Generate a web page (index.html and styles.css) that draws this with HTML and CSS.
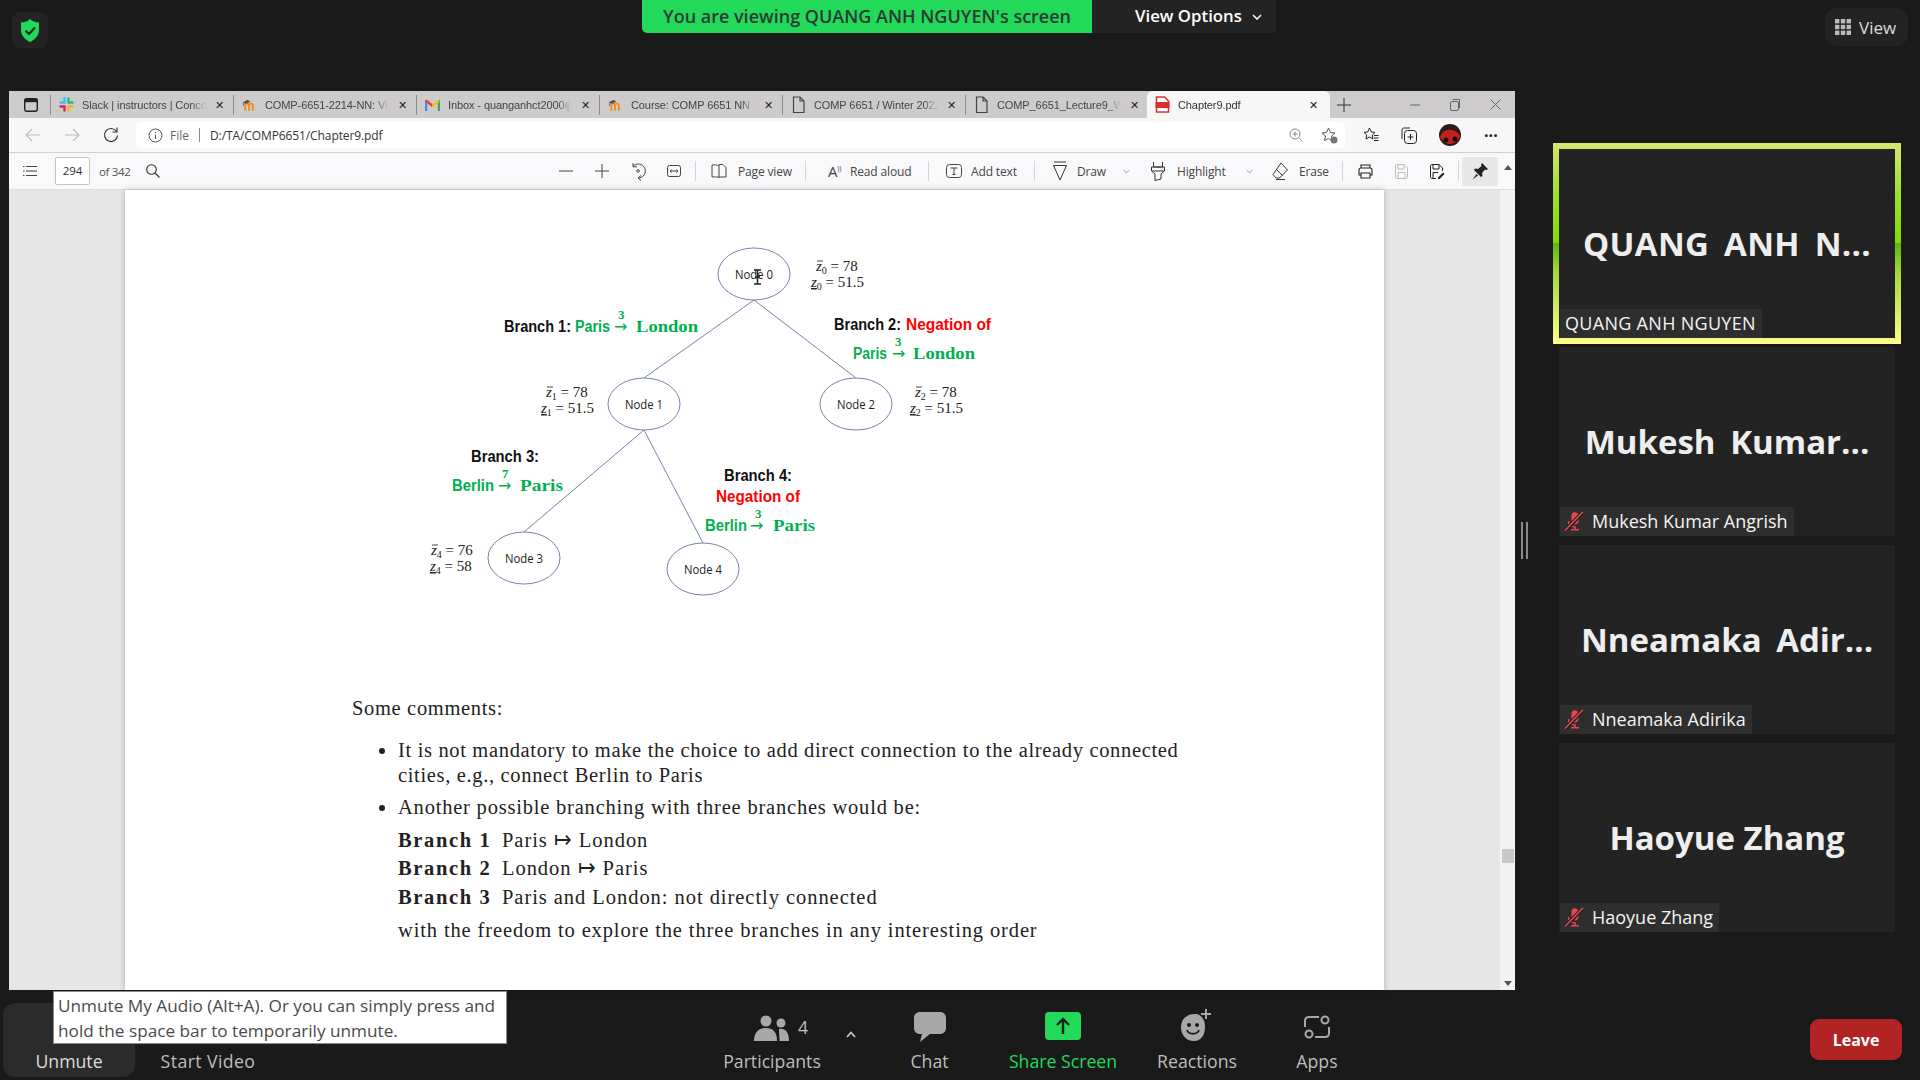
FILE: index.html
```html
<!DOCTYPE html>
<html lang="en">
<head>
    <meta charset="UTF-8">
    <title>Zoom meeting</title>
    <link rel="stylesheet" href="styles.css">
</head>
<body>
    <svg class="defs" width="0" height="0">
        <symbol id="moodle" viewBox="0 0 16 14">
            <path d="M1 13V7.500C1 6 2 5.500 3 5.500C4.500 5.500 5 6.500 5 7.500V13M5 7.500C5 6 6 5.500 7 5.500C8.500 5.500 9 6.500 9 7.500V13" transform="translate(2.500 0)" fill="none" stroke="#f58a1f" stroke-width="2"/>
            <path d="M1 4L6 1.500L9 3.500L4 6Z" fill="#555"/>
            <path d="M1.500 4V8" stroke="#555" stroke-width=".8"/>
        </symbol>
        <symbol id="doc" viewBox="0 0 14 18">
            <path d="M2 1H8.500L12.500 5V16.500H2Z M8.500 1V5H12.500" fill="none" stroke="#444" stroke-width="1.200"/>
        </symbol>
        <symbol id="mute" viewBox="0 0 20 20">
            <path d="M12 1.500C9.500 .5 7.500 2 7.500 4.500V10C7.500 12 9 13.500 11 13.500C13 13.500 14.500 12 14.500 10V4.500C14.500 3 13.500 2 12 1.500Z" fill="#e8494f"/>
            <path d="M4.500 10C4.500 14 7.500 16 11 16C11 17 11 18 11 18.500M7 18.800H15" fill="none" stroke="#e8494f" stroke-width="1.500"/>
            <path d="M1 20L19 1" stroke="#232323" stroke-width="4"/>
            <path d="M1 19.500L19 .8" stroke="#e8494f" stroke-width="1.500"/>
        </symbol>
        <symbol id="chev" viewBox="0 0 10 6">
            <path d="M1 1L5 5L9 1" fill="none" stroke="#777" stroke-width="1"/>
        </symbol>
    </svg>

    <!-- top bar -->
    <header class="topbar">
        <div class="topbar-left">
            <div class="shield-tile">
                <svg width="18" height="23" viewBox="0 0 18 23"><path d="M9 0C11 2 14.500 3.500 18 3.500V11C18 17 13 21 9 23C5 21 0 17 0 11V3.500C3.500 3.500 7 2 9 0Z" fill="#23d959"/><path d="M4.500 11.500L8 15L14 8.500" fill="none" stroke="#1f2a24" stroke-width="2.200"/></svg>
            </div>
        </div>
        <div class="viewing">
            <div class="viewing-label">You are viewing QUANG ANH NGUYEN's screen</div>
            <div class="view-options">View Options
                <svg width="10" height="6" viewBox="0 0 10 6"><path d="M1 1L5 5L9 1" fill="none" stroke="#fff" stroke-width="1.500"/></svg>
            </div>
        </div>
        <div class="topbar-right">
            <div class="view-btn">
                <svg width="16" height="16" viewBox="0 0 16 16" fill="#bbb"><rect width="4.400" height="4.400"/><rect x="5.800" width="4.400" height="4.400"/><rect x="11.600" width="4.400" height="4.400"/><rect y="5.800" width="4.400" height="4.400"/><rect x="5.800" y="5.800" width="4.400" height="4.400"/><rect x="11.600" y="5.800" width="4.400" height="4.400"/><rect y="11.600" width="4.400" height="4.400"/><rect x="5.800" y="11.600" width="4.400" height="4.400"/><rect x="11.600" y="11.600" width="4.400" height="4.400"/></svg>
                View
            </div>
        </div>
    </header>

    <main class="stage">
        <!-- shared screen: browser -->
        <section class="browser">
            <div class="tabstrip">
                <div class="app-icon">
                    <svg width="14" height="14" viewBox="0 0 14 14"><rect x=".7" y=".7" width="12.600" height="12.600" rx="2" fill="none" stroke="#222" stroke-width="1.400"/><rect x=".7" y=".7" width="12.600" height="3.500" fill="#222"/></svg>
                </div>
                <i class="tab-sep"></i>
                <div class="tab">
                    <svg class="tab-icon" width="15" height="15" viewBox="0 0 15 15"><path d="M5.500 1V5.500H1.500" stroke="#36c5f0" stroke-width="2.400" fill="none" stroke-linecap="round"/><path d="M9.500 1.500V5.500H13.500" stroke="#2eb67d" stroke-width="2.400" fill="none" stroke-linecap="round"/><path d="M13.500 9.500H9.500V13.500" stroke="#ecb22e" stroke-width="2.400" fill="none" stroke-linecap="round"/><path d="M5.500 13.500V9.500H1.500" stroke="#e01e5a" stroke-width="2.400" fill="none" stroke-linecap="round"/></svg>
                    <span class="tab-title">Slack | instructors | Concor</span>
                    <span class="tab-close">✕</span>
                </div>
                <i class="tab-sep"></i>
                <div class="tab">
                    <svg class="tab-icon" width="15" height="14"><use href="#moodle"/></svg>
                    <span class="tab-title">COMP-6651-2214-NN: Vir</span>
                    <span class="tab-close">✕</span>
                </div>
                <i class="tab-sep"></i>
                <div class="tab">
                    <svg class="tab-icon" width="15" height="12" viewBox="0 0 15 12"><path d="M1 12V1" stroke="#4285f4" stroke-width="2.400"/><path d="M14 12V1" stroke="#34a853" stroke-width="2.400"/><path d="M1 1.500L7.500 7" stroke="#ea4335" stroke-width="2.400"/><path d="M14 1.500L7.500 7" stroke="#fbbc04" stroke-width="2.400"/></svg>
                    <span class="tab-title">Inbox - quanganhct2000@</span>
                    <span class="tab-close">✕</span>
                </div>
                <i class="tab-sep"></i>
                <div class="tab">
                    <svg class="tab-icon" width="15" height="14"><use href="#moodle"/></svg>
                    <span class="tab-title">Course: COMP 6651 NN 2</span>
                    <span class="tab-close">✕</span>
                </div>
                <i class="tab-sep"></i>
                <div class="tab">
                    <svg class="tab-icon" width="14" height="18"><use href="#doc"/></svg>
                    <span class="tab-title">COMP 6651 / Winter 2022</span>
                    <span class="tab-close">✕</span>
                </div>
                <i class="tab-sep"></i>
                <div class="tab">
                    <svg class="tab-icon" width="14" height="18"><use href="#doc"/></svg>
                    <span class="tab-title">COMP_6651_Lecture9_Wir</span>
                    <span class="tab-close">✕</span>
                </div>
                <div class="tab tab-active">
                    <svg class="tab-icon" width="14" height="17" viewBox="0 0 14 17"><path d="M1 1H9L13 5V16H1Z" fill="#fff" stroke="#d9302c" stroke-width="1.500"/><rect y="6" width="14" height="6" fill="#d9302c"/></svg>
                    <span class="tab-title">Chapter9.pdf</span>
                    <span class="tab-close">✕</span>
                </div>
                <div class="tab-plus">
                    <svg width="14" height="14" viewBox="0 0 14 14"><path d="M7 0V14M0 7H14" stroke="#333" stroke-width="1"/></svg>
                </div>
                <div class="win-controls">
                    <svg width="10" height="10" viewBox="0 0 10 10"><path d="M0 5H10" stroke="#666"/></svg>
                    <svg width="10" height="12" viewBox="0 0 10 12"><rect x=".5" y="2.500" width="8" height="9" rx="1.500" fill="none" stroke="#666"/><path d="M2.500 .5H9.500V9" fill="none" stroke="#666"/></svg>
                    <svg width="11" height="11" viewBox="0 0 11 11"><path d="M.5 .5L10.500 10.500M10.500 .5L.5 10.500" stroke="#666"/></svg>
                </div>
            </div>

            <div class="navbar">
                <svg class="nav-btn" width="16" height="14" viewBox="0 0 16 14"><path d="M15 7H1M7 1L1 7L7 13" fill="none" stroke="#bbb" stroke-width="1.100"/></svg>
                <svg class="nav-btn" width="16" height="14" viewBox="0 0 16 14"><path d="M1 7H15M9 1L15 7L9 13" fill="none" stroke="#bbb" stroke-width="1.100"/></svg>
                <svg class="nav-btn" width="16" height="16" viewBox="0 0 16 16"><path d="M13.500 4.500A6.500 6.500 0 1 0 14.500 8.500" fill="none" stroke="#333" stroke-width="1.200"/><path d="M14 .5V5H9.500" fill="none" stroke="#333" stroke-width="1.200"/></svg>
                <div class="address">
                    <svg width="15" height="15" viewBox="0 0 15 15"><circle cx="7.500" cy="7.500" r="6.500" fill="none" stroke="#555"/><path d="M7.500 6.500V11M7.500 4V5" stroke="#555"/></svg>
                    <span class="addr-file">File</span>
                    <i class="addr-sep"></i>
                    <span class="addr-url">D:/TA/COMP6651/Chapter9.pdf</span>
                    <div class="addr-right">
                        <svg width="14" height="14" viewBox="0 0 14 14"><circle cx="6" cy="6" r="5" fill="none" stroke="#888"/><path d="M10 10L13.500 13.500M6 3.500V8.500M3.500 6H8.500" stroke="#888"/></svg>
                        <svg width="17" height="17" viewBox="0 0 17 17"><path d="M7.500 1L9.500 5.500L14 6L10.500 9L11 13.500L7.500 11.500L3.500 13.500L4.500 9L1 6L5.500 5.500Z" fill="none" stroke="#555"/><circle cx="13" cy="13" r="3.500" fill="#777"/></svg>
                    </div>
                </div>
                <div class="nav-right">
                    <svg width="16" height="16" viewBox="0 0 16 16"><path d="M6.500 1L8.300 5L12 5.400L9.300 8L10 12L6.500 10L3 12L3.700 8L1 5.400L4.700 5Z" fill="none" stroke="#222"/><path d="M11 8.500H15.500M11 11H15.500M11 13.500H15.500" stroke="#222"/></svg>
                    <svg width="16" height="17" viewBox="0 0 16 17"><rect x="3.500" y="3.500" width="12" height="13" rx="3" fill="none" stroke="#222"/><path d="M1 12V3C1 1.500 2 1 3 1H9M9.500 7V13M6.500 10H12.500" fill="none" stroke="#222"/></svg>
                    <svg width="22" height="22" viewBox="0 0 22 22"><circle cx="11" cy="11" r="11" fill="#2a1c16"/><path d="M1 13C3 7 8 5 13 6C17 7 20 9 21 12C20 17 15 20 10 20C6 19 3 17 1 13Z" fill="#c41f1f"/><circle cx="7" cy="16" r="2.500" fill="#111"/><circle cx="16" cy="15" r="2.500" fill="#111"/></svg>
                    <span class="nav-dots">···</span>
                </div>
            </div>

            <div class="pdf-tools">
                <svg class="pdf-list" width="14" height="10" viewBox="0 0 14 10"><path d="M3 .5H14M3 5H14M3 9.500H14M0 .5H1.500M0 5H1.500M0 9.500H1.500" stroke="#444"/></svg>
                <div class="page-box">294</div>
                <span class="page-of">of 342</span>
                <svg class="pdf-search" width="14" height="14" viewBox="0 0 14 14"><circle cx="5.500" cy="5.500" r="4.800" fill="none" stroke="#333" stroke-width="1.100"/><path d="M9 9L13.500 13.500" stroke="#333" stroke-width="1.100"/></svg>

                <div class="tbtn tbtn-first"><svg width="14" height="2" viewBox="0 0 14 2"><path d="M0 1H14" stroke="#444"/></svg></div>
                <div class="tbtn"><svg width="14" height="14" viewBox="0 0 14 14"><path d="M0 7H14M7 0V14" stroke="#444"/></svg></div>
                <div class="tbtn"><svg width="16" height="19" viewBox="0 0 16 19"><path d="M3 4.500A7 7 0 1 1 8 16" fill="none" stroke="#444"/><path d="M3 1V4.800H7M11 13.500L8 16L11 18.500" fill="none" stroke="#444"/><circle cx="8" cy="9" r="1.300" fill="none" stroke="#444"/></svg></div>
                <div class="tbtn"><svg width="14" height="12" viewBox="0 0 14 12"><rect x=".5" y=".5" width="13" height="11" rx="2" fill="none" stroke="#444"/><path d="M3 6H11M4.500 4.500L3 6L4.500 7.500M9.500 4.500L11 6L9.500 7.500" fill="none" stroke="#444"/></svg></div>
                <i class="tool-sep"></i>

                <div class="tool tool-page"><svg width="16" height="14" viewBox="0 0 16 14"><path d="M8 2C6 .8 3 .8 1 1V13C3 12.800 6 12.800 8 13.500ZM8 2V.5H12L15 3.500V13H8" fill="none" stroke="#444"/></svg><span>Page view</span></div>
                <i class="tool-sep"></i>
                <div class="tool tool-read"><span class="read-a">A<sup>))</sup></span><span>Read aloud</span></div>
                <i class="tool-sep"></i>
                <div class="tool tool-add"><svg width="16" height="14" viewBox="0 0 16 14"><rect x=".5" y=".5" width="15" height="13" rx="3" fill="none" stroke="#444"/><path d="M4.500 4H11.500M8 4V10.500M6.500 10.500H9.500" fill="none" stroke="#444"/></svg><span>Add text</span></div>
                <i class="tool-sep"></i>
                <div class="tool tool-draw"><svg width="14" height="20" viewBox="0 0 14 20"><path d="M.5 4.500H13.500L7 19ZM1 1H13" fill="none" stroke="#333"/></svg><span>Draw</span><svg class="tool-chev" width="7" height="5"><use href="#chev"/></svg></div>
                <div class="tool tool-high"><svg width="14" height="20" viewBox="0 0 14 20"><path d="M2.500 1V6H11.500V1M.5 6H13.500V10L10 13V18L4 19.500V13L.5 10ZM1 10H13" fill="none" stroke="#333"/></svg><span>Highlight</span><svg class="tool-chev" width="7" height="5"><use href="#chev"/></svg></div>
                <div class="tool tool-erase"><svg width="16" height="18" viewBox="0 0 16 18"><path d="M9 1L15.500 8L7.500 16H4L1 12.500ZM4 7L10.500 13.500M4 17.500H13" fill="none" stroke="#333"/></svg><span>Erase</span></div>
                <i class="tool-sep"></i>
                <div class="tbtn tbtn-print"><svg width="15" height="15" viewBox="0 0 15 15"><path d="M3 4V1H12V4M3 11H1V6C1 5 2 4 3 4H12C13 4 14 5 14 6V11H12M3 9H12V14H3Z" fill="none" stroke="#222" stroke-width="1.100"/></svg></div>
                <div class="tbtn"><svg width="13" height="15" viewBox="0 0 13 15"><path d="M.5 2C.5 1 1 .5 2 .5H9L12.500 4V13C12.500 14 12 14.500 11 14.500H2C1 14.500 .5 14 .5 13ZM3 .5V5H9V.5M3 14.500V8.500H10V14.500" fill="none" stroke="#bbb"/></svg></div>
                <div class="tbtn"><svg width="15" height="15" viewBox="0 0 15 15"><path d="M6 14.500H2C1 14.500 .5 14 .5 13V2C.5 1 1 .5 2 .5H9L12.500 4V7M3 .5V5H9V.5M3 14V8.500H8" fill="none" stroke="#222"/><path d="M8 13.500L13 8.500L14.500 10L9.500 15H8Z" fill="#222"/></svg></div>
                <i class="tool-sep"></i>
                <div class="pin-btn"><svg width="16" height="17" viewBox="0 0 16 17"><path d="M10 0L16 6L14.500 7L13 6.500L10 10L10.500 13L9 14L2 7L3 5.500L6 6L9.500 3L9 1.500ZM4.500 11L.5 16.500L6 12.500Z" fill="#222"/></svg></div>
            </div>

            <div class="viewer">
                <div class="pdf-side"></div>
                <article class="pdf-page">
                    <svg class="diagram" width="1259" height="500" viewBox="125 190 1259 500">
                        <g class="edges">
                            <path d="M754 300L644 378M754 300L856 378M644 430L524 532M644 430L703 543"/>
                            <ellipse cx="754" cy="274" rx="36" ry="26"/>
                            <ellipse cx="644" cy="404" rx="36" ry="26"/>
                            <ellipse cx="856" cy="404" rx="36" ry="26"/>
                            <ellipse cx="524" cy="558" rx="36" ry="26"/>
                            <ellipse cx="703" cy="569" rx="36" ry="26"/>
                        </g>
                        <g class="node-label">
                            <text x="735" y="279" textLength="38" lengthAdjust="spacingAndGlyphs">Node 0</text>
                            <text x="625" y="409" textLength="38" lengthAdjust="spacingAndGlyphs">Node 1</text>
                            <text x="837" y="409" textLength="38" lengthAdjust="spacingAndGlyphs">Node 2</text>
                            <text x="505" y="563" textLength="38" lengthAdjust="spacingAndGlyphs">Node 3</text>
                            <text x="684" y="574" textLength="38" lengthAdjust="spacingAndGlyphs">Node 4</text>
                        </g>
                        <g class="bound">
                            <text x="816" y="271"><tspan class="it">z</tspan><tspan class="sub" dy="3">0</tspan><tspan dy="-3"> = 78</tspan></text>
                            <text x="811" y="287"><tspan class="it ul">z</tspan><tspan class="sub" dy="3">0</tspan><tspan dy="-3"> = 51.5</tspan></text>
                            <text x="546" y="397"><tspan class="it">z</tspan><tspan class="sub" dy="3">1</tspan><tspan dy="-3"> = 78</tspan></text>
                            <text x="541" y="413"><tspan class="it ul">z</tspan><tspan class="sub" dy="3">1</tspan><tspan dy="-3"> = 51.5</tspan></text>
                            <text x="915" y="397"><tspan class="it">z</tspan><tspan class="sub" dy="3">2</tspan><tspan dy="-3"> = 78</tspan></text>
                            <text x="910" y="413"><tspan class="it ul">z</tspan><tspan class="sub" dy="3">2</tspan><tspan dy="-3"> = 51.5</tspan></text>
                            <text x="431" y="555"><tspan class="it">z</tspan><tspan class="sub" dy="3">4</tspan><tspan dy="-3"> = 76</tspan></text>
                            <text x="430" y="571"><tspan class="it ul">z</tspan><tspan class="sub" dy="3">4</tspan><tspan dy="-3"> = 58</tspan></text>
                            <path class="bar" d="M817 261H823M547 387H553M916 387H922M432 545H438"/>
                        </g>
                        <g class="branch">
                            <text x="504" y="332" textLength="67" lengthAdjust="spacingAndGlyphs">Branch 1:</text>
                            <text class="green" x="575" y="332" textLength="35" lengthAdjust="spacingAndGlyphs">Paris</text>
                            <text class="city" x="636" y="332" textLength="62" lengthAdjust="spacingAndGlyphs">London</text>
                            <text class="arrow" x="614" y="332">→</text>
                            <text class="over" x="618" y="319">3</text>

                            <text x="834" y="330" textLength="67" lengthAdjust="spacingAndGlyphs">Branch 2:</text>
                            <text class="red" x="906" y="330" textLength="85" lengthAdjust="spacingAndGlyphs">Negation of</text>
                            <text class="over" x="895" y="346">3</text>
                            <text class="green" x="853" y="359" textLength="34" lengthAdjust="spacingAndGlyphs">Paris</text>
                            <text class="arrow" x="892" y="359">→</text>
                            <text class="city" x="913" y="359" textLength="62" lengthAdjust="spacingAndGlyphs">London</text>

                            <text x="471" y="462" textLength="68" lengthAdjust="spacingAndGlyphs">Branch 3:</text>
                            <text class="over" x="502" y="478">7</text>
                            <text class="green" x="452" y="491" textLength="42" lengthAdjust="spacingAndGlyphs">Berlin</text>
                            <text class="arrow" x="498" y="491">→</text>
                            <text class="city" x="520" y="491" textLength="43" lengthAdjust="spacingAndGlyphs">Paris</text>

                            <text x="724" y="481" textLength="68" lengthAdjust="spacingAndGlyphs">Branch 4:</text>
                            <text class="red" x="716" y="502" textLength="84" lengthAdjust="spacingAndGlyphs">Negation of</text>
                            <text class="over" x="755" y="518">3</text>
                            <text class="green" x="705" y="531" textLength="42" lengthAdjust="spacingAndGlyphs">Berlin</text>
                            <text class="arrow" x="750" y="531">→</text>
                            <text class="city" x="773" y="531" textLength="42" lengthAdjust="spacingAndGlyphs">Paris</text>
                        </g>
                        <path class="cursor" d="M754 270H761M754 284H761M757.500 270V284M755 277H760"/>
                    </svg>
                    <div class="comments">
                        <p class="comments-lead">Some comments:</p>
                        <ul class="comments-list">
                            <li>It is not mandatory to make the choice to add direct connection to the already connected cities, e.g., connect Berlin to Paris</li>
                            <li class="comments-wide">Another possible branching with three branches would be:</li>
                        </ul>
                        <dl class="branch-list">
                            <dt>Branch 1</dt><dd>Paris ↦ London</dd>
                            <dt>Branch 2</dt><dd>London ↦ Paris</dd>
                            <dt>Branch 3</dt><dd>Paris and London: not directly connected</dd>
                        </dl>
                        <p class="comments-tail">with the freedom to explore the three branches in any interesting order</p>
                    </div>
                </article>
                <div class="pdf-side pdf-side-right"></div>
                <div class="scrollbar">
                    <span class="scroll-up"></span>
                    <span class="scroll-thumb"></span>
                    <span class="scroll-down"></span>
                </div>
            </div>
        </section>

        <div class="split-handle"></div>

        <!-- participants -->
        <aside class="gallery">
            <div class="tile tile-active">
                <div class="tile-name tile-name-caps">QUANG ANH N...</div>
                <div class="tile-label tile-label-caps">QUANG ANH NGUYEN</div>
            </div>
            <div class="tile">
                <div class="tile-name">Mukesh Kumar...</div>
                <div class="tile-label"><svg width="20" height="20"><use href="#mute"/></svg>Mukesh Kumar Angrish</div>
            </div>
            <div class="tile">
                <div class="tile-name">Nneamaka Adir...</div>
                <div class="tile-label"><svg width="20" height="20"><use href="#mute"/></svg>Nneamaka Adirika</div>
            </div>
            <div class="tile">
                <div class="tile-name tile-name-plain">Haoyue Zhang</div>
                <div class="tile-label"><svg width="20" height="20"><use href="#mute"/></svg>Haoyue Zhang</div>
            </div>
        </aside>
    </main>

    <!-- meeting controls -->
    <footer class="controls">
        <div class="ctrl ctrl-unmute"><div class="ctrl-icon"></div><span>Unmute</span></div>
        <div class="ctrl ctrl-video"><div class="ctrl-icon"></div><span>Start Video</span></div>

        <div class="ctrl ctrl-people">
            <div class="ctrl-icon">
                <svg width="36" height="26" viewBox="0 0 36 26" fill="#a8a8a8"><circle cx="12" cy="6" r="5.500"/><circle cx="27" cy="8" r="4.500"/><path d="M0 26C0 17 5 13 12 13C19 13 23 17 23 26Z"/><path d="M25 14C31 13 35 17 35 26H25.500C25.500 21 25 17 25 14Z"/></svg>
                <span class="people-count">4</span>
            </div>
            <span>Participants</span>
        </div>
        <div class="people-caret"><svg width="10" height="7" viewBox="0 0 10 7"><path d="M1 6L5 1.500L9 6" fill="none" stroke="#ccc" stroke-width="1.600"/></svg></div>
        <div class="ctrl ctrl-chat">
            <div class="ctrl-icon"><svg width="32" height="30" viewBox="0 0 32 30"><path d="M6 0H26C29.500 0 32 2.500 32 6V16C32 19.500 29.500 22 26 22H16L6 30L8 22H6C2.500 22 0 19.500 0 16V6C0 2.500 2.500 0 6 0Z" fill="#a8a8a8"/></svg></div>
            <span>Chat</span>
        </div>
        <div class="ctrl ctrl-share">
            <div class="ctrl-icon"><svg width="36" height="28" viewBox="0 0 36 28"><rect width="36" height="28" rx="4" fill="#23d959"/><path d="M18 22V8M12 13L18 7L24 13" fill="none" stroke="#10241a" stroke-width="2.400"/></svg></div>
            <span>Share Screen</span>
        </div>
        <div class="ctrl ctrl-react">
            <div class="ctrl-icon"><svg width="32" height="32" viewBox="0 0 32 32"><path d="M16 5C19 6 24 9 24 18C24 26 20 32 13 32C5 32 0 26 0 18C0 10 6 4 16 5Z" fill="#a8a8a8"/><circle cx="8" cy="16" r="2" fill="#1a1a1a"/><circle cx="16" cy="16" r="2" fill="#1a1a1a"/><path d="M6 21C8 26 16 26 18 21" fill="none" stroke="#1a1a1a" stroke-width="1.800"/><path d="M25 0V10M20 5H30" stroke="#a8a8a8" stroke-width="2"/></svg></div>
            <span>Reactions</span>
        </div>
        <div class="ctrl ctrl-apps">
            <div class="ctrl-icon"><svg width="26" height="24" viewBox="0 0 26 24" fill="none" stroke="#a8a8a8" stroke-width="2"><path d="M15 2H5C2.500 2 1 3.500 1 6V12"/><path d="M11 22H21C23.500 22 25 20.500 25 18V12"/><circle cx="21" cy="5" r="3.500"/><circle cx="5" cy="19" r="3.500"/></svg></div>
            <span>Apps</span>
        </div>
        <button class="leave">Leave</button>

        <div class="tooltip">Unmute My Audio (Alt+A). Or you can simply press and<br>hold the space bar to temporarily unmute.</div>
    </footer>
</body>
</html>
```

FILE: styles.css
```css
* {
    box-sizing: border-box;
}
html, body {
    margin: 0;
    height: 100%;
}
body {
    width: 1920px;
    height: 1080px;
    overflow: hidden;
    background-color: #1a1a1a;
    font-family: "Open Sans", "Noto Sans", sans-serif;
    display: flex;
    flex-direction: column;
}
.defs {
    position: absolute;
}

/* top bar */
.topbar {
    height: 91px;
    display: grid;
    grid-template-columns: 642px 634px 1fr;
    align-items: start;
}
.shield-tile {
    width: 36px;
    height: 36px;
    margin: 12px 0 0 12px;
    background-color: #232323;
    border-radius: 9px;
    display: flex;
    align-items: center;
    justify-content: center;
}
.viewing {
    height: 33px;
    display: flex;
    background-color: #232323;
    border-radius: 0 0 5px 5px;
    overflow: hidden;
}
.viewing-label {
    width: 450px;
    background-color: #23d959;
    color: #2a3a35;
    font-size: 18px;
    font-weight: 600;
    line-height: 33px;
    padding-left: 21px;
    white-space: nowrap;
}
.view-options {
    flex: 1;
    padding-left: 43px;
    color: #fff;
    font-size: 16.800px;
    font-weight: 600;
    line-height: 31px;
    white-space: nowrap;
}
.view-options svg {
    margin-left: 6px;
    vertical-align: 2px;
}
.topbar-right {
    display: flex;
    justify-content: flex-end;
    padding: 8px 12px 0 0;
}
.view-btn {
    width: 83px;
    height: 38px;
    background-color: #232323;
    border-radius: 12px;
    color: #ddd;
    font-size: 17px;
    display: flex;
    align-items: center;
    gap: 8px;
    padding-left: 10px;
}

/* browser */
.stage {
    height: 899px;
    display: flex;
    padding-left: 9px;
}
.browser {
    width: 1506px;
    display: flex;
    flex-direction: column;
    background-color: #f7f7f7;
}
.tabstrip {
    height: 27px;
    background-color: #cdcbcc;
    display: flex;
    align-items: center;
    flex: none;
}
.app-icon {
    width: 41px;
    padding-left: 15px;
    display: flex;
}
.tab-sep {
    width: 1px;
    height: 20px;
    background-color: #8f8f8f;
    flex: none;
}
.tab {
    width: 182px;
    height: 27px;
    flex: none;
    display: flex;
    align-items: center;
    padding-left: 8px;
    position: relative;
}
.tab-icon {
    flex: none;
    width: 15px;
}
.tab-title {
    width: 124px;
    margin-left: 8px;
    font-family: "Liberation Sans", sans-serif;
    font-size: 11px;
    letter-spacing: -.1px;
    color: #444;
    white-space: nowrap;
    -webkit-mask-image: linear-gradient(to right, #000 88%, transparent);
    mask-image: linear-gradient(to right, #000 88%, transparent);
}
.tab-close {
    position: absolute;
    right: 9px;
    font-size: 11px;
    color: #222;
}
.tab-active {
    background-color: #f7f7f7;
    border-radius: 6px 6px 0 0;
    margin-left: -1px;
    width: 183px;
}
.tab-active .tab-close {
    right: 12px;
}
.tab-active .tab-title {
    color: #333;
}
.tab-plus {
    width: 28px;
    display: flex;
    justify-content: center;
}
.win-controls {
    display: flex;
    align-items: center;
    gap: 30px;
    margin-left: 52px;
}
.navbar {
    height: 35px;
    flex: none;
    display: flex;
    align-items: center;
    padding-left: 16px;
    border-bottom: 1px solid #cfcfcf;
}
.nav-btn {
    margin-right: 23px;
}
.nav-btn:nth-child(3) {
    margin-right: 17px;
}
.address {
    width: 1209px;
    height: 26px;
    background-color: #fff;
    border-radius: 5px;
    display: flex;
    align-items: center;
    padding-left: 12px;
    font-size: 12px;
}
.addr-file {
    margin-left: 7px;
    color: #666;
}
.addr-sep {
    width: 1px;
    height: 14px;
    background-color: #888;
    margin: 0 10px;
}
.addr-url {
    color: #333;
    letter-spacing: -.1px;
}
.addr-right {
    margin-left: auto;
    display: flex;
    align-items: center;
    gap: 18px;
    padding-right: 7px;
}
.nav-right {
    display: flex;
    align-items: center;
    margin-left: 18px;
    gap: 22px;
}
.nav-dots {
    color: #222;
    font-weight: 700;
    font-size: 16px;
    margin-left: 1px;
}

/* pdf toolbar */
.pdf-tools {
    height: 37px;
    flex: none;
    display: flex;
    align-items: center;
    background-color: #f9f9fb;
    border-bottom: 1px solid #dedede;
    font-size: 12px;
    color: #444;
}
.pdf-list {
    margin-left: 14px;
}
.page-box {
    width: 35px;
    height: 28px;
    margin-left: 18px;
    background-color: #fff;
    border: 1px solid #c4c4c4;
    border-radius: 2px;
    text-align: center;
    line-height: 26px;
    color: #333;
    font-size: 11.500px;
}
.page-of {
    margin-left: 9px;
    width: 30px;
    font-size: 11.500px;
    letter-spacing: -.35px;
    white-space: nowrap;
    color: #555;
}
.pdf-search {
    margin-left: 17px;
}
.tbtn {
    width: 36px;
    display: flex;
    justify-content: center;
    align-items: center;
    flex: none;
}
.tbtn-first {
    margin-left: 388px;
}
.tool-sep {
    width: 1px;
    height: 20px;
    background-color: #d4d4d4;
    flex: none;
}
.tbtn + .tool-sep {
    margin-left: 3px;
}
.tool {
    display: flex;
    align-items: center;
    flex: none;
    white-space: nowrap;
    letter-spacing: -.15px;
}
.tool-page {
    width: 109px;
    padding-left: 15px;
    gap: 11px;
}
.tool-read {
    width: 122px;
    padding-left: 22px;
    gap: 0;
}
.read-a {
    font-size: 15px;
    width: 22px;
    line-height: 1;
}
.read-a sup {
    font-size: 7px;
    vertical-align: 6px;
}
.tool-add {
    width: 105px;
    padding-left: 17px;
    gap: 9px;
}
.tool-draw {
    width: 105px;
    padding-left: 18px;
    gap: 10px;
}
.tool-high {
    width: 125px;
    padding-left: 11px;
    gap: 12px;
}
.tool-chev {
    margin-left: 8px;
}
.tool-draw .tool-chev {
    margin-left: 7px;
}
.tool-erase {
    width: 77px;
    padding-left: 7px;
    gap: 11px;
}
.tbtn-print {
    margin-left: 4px;
}
.pin-btn {
    width: 36px;
    height: 29px;
    margin-left: 3px;
    background-color: #e8e8e8;
    border-radius: 2px;
    display: flex;
    align-items: center;
    justify-content: center;
}

/* pdf viewer */
.viewer {
    flex: 1;
    display: flex;
    min-height: 0;
    background-color: #e6e6e6;
}
.pdf-side {
    width: 116px;
    flex: none;
}
.pdf-side-right {
    width: 116px;
}
.pdf-page {
    width: 1259px;
    flex: none;
    background-color: #fff;
    box-shadow: 0 0 6px rgba(0, 0, 0, .25);
    overflow: hidden;
    position: relative;
}
.diagram {
    display: block;
}
.edges {
    fill: none;
    stroke: #7684ab;
    stroke-width: 1;
}
.node-label text {
    font-family: "Open Sans", sans-serif;
    font-size: 12.500px;
    fill: #222;
}
.bound text {
    font-family: "Liberation Serif", serif;
    font-size: 15px;
    fill: #222;
}
.bound .it {
    font-style: italic;
}
.bound .ul {
    text-decoration: underline;
}
.bound .sub {
    font-size: 10px;
}
.bound .bar {
    stroke: #444;
    stroke-width: 1;
    fill: none;
}
.branch text {
    font-family: "Liberation Sans", sans-serif;
    font-size: 16px;
    font-weight: 700;
    fill: #111;
}
.branch .green {
    fill: #00b050;
}
.branch .red {
    fill: #ff0000;
}
.branch .city {
    font-family: "Liberation Serif", serif;
    fill: #00b050;
    font-size: 17px;
}
.branch .arrow {
    font-family: "DejaVu Sans", sans-serif;
    font-weight: 400;
    font-size: 16px;
    fill: #00b050;
}
.branch .over {
    font-family: "Liberation Serif", serif;
    font-size: 13px;
    fill: #00b050;
}
.cursor {
    fill: none;
    stroke: #222;
    stroke-width: 1.500;
}
.comments {
    padding-left: 227px;
    font-family: "Liberation Serif", serif;
    font-size: 20.500px;
    letter-spacing: .66px;
    line-height: 25px;
    color: #222;
}
.comments p {
    margin: 0;
}
.comments-lead {
    margin-top: 6px !important;
}
.comments-list {
    margin: 17px 0 0;
    padding: 0 0 0 46px;
    width: 840px;
}
.comments-list li + li {
    margin-top: 7px;
}
.comments-wide {
    letter-spacing: .79px;
}
.branch-list {
    margin: 6px 0 0 46px;
    display: grid;
    grid-template-columns: 104px 1fr;
    grid-auto-rows: 28.500px;
    align-items: center;
}
.branch-list dt {
    font-weight: 700;
    letter-spacing: 1.650px;
}
.branch-list dd {
    margin: 0;
    letter-spacing: .95px;
}
.comments-tail {
    margin: 6px 0 0 46px !important;
    letter-spacing: .87px;
}
.scrollbar {
    width: 15px;
    flex: none;
    background-color: #f3f3f5;
    position: relative;
}
.scroll-up {
    position: absolute;
    top: -25px;
    left: 4px;
    border: 4px solid transparent;
    border-top: 0;
    border-bottom: 5px solid #555;
}
.scroll-thumb {
    position: absolute;
    top: 659px;
    left: 2px;
    width: 12px;
    height: 14px;
    background-color: #c8c8c8;
}
.scroll-down {
    position: absolute;
    bottom: 4px;
    left: 4px;
    border: 4px solid transparent;
    border-bottom: 0;
    border-top: 5px solid #555;
}

/* gallery */
.split-handle {
    width: 7px;
    height: 37px;
    margin: 431px 0 0 6px;
    border-left: 2px solid #8a8a8a;
    border-right: 2px solid #8a8a8a;
    flex: none;
}
.gallery {
    margin-left: 31px;
    padding-top: 58px;
    width: 336px;
    display: flex;
    flex-direction: column;
    gap: 9px;
}
.tile {
    height: 189px;
    background-color: #232323;
    display: flex;
    align-items: center;
    justify-content: center;
    position: relative;
    flex: none;
}
.tile-active {
    outline: 6px solid #7fdc00;
    outline-offset: 0;
}
.tile-active::before {
    content: "";
    position: absolute;
    inset: -6px;
    padding: 6px;
    background: linear-gradient(to bottom, #d5e574 0, #9fe02c 25%, #7fdc00 50%, #5db80e 50%, #a8d83a 65%, #d9ec70 85%, #ffff8a 100%);
    -webkit-mask: linear-gradient(#000 0 0) content-box, linear-gradient(#000 0 0);
    -webkit-mask-composite: xor;
    mask-composite: exclude;
}
.tile-name {
    color: #eee;
    font-size: 33px;
    font-weight: 700;
    word-spacing: 6px;
    white-space: nowrap;
    margin-top: -1px;
}
.tile-name-caps {
    letter-spacing: .3px;
}
.tile-name-plain {
    word-spacing: 0;
}
.tile-label {
    position: absolute;
    left: 1px;
    bottom: 0;
    height: 29px;
    padding: 0 6px 2px 4px;
    background-color: #2e2e2e;
    color: #f4f4f4;
    font-size: 18px;
    display: flex;
    align-items: center;
    gap: 8px;
    white-space: nowrap;
}
.tile-label-caps {
    letter-spacing: .3px;
    padding-left: 5px;
}

/* meeting controls */
.controls {
    height: 90px;
    position: relative;
    display: flex;
    align-items: flex-start;
    padding: 13px 0 0 3px;
}
.ctrl {
    height: 74px;
    display: flex;
    flex-direction: column;
    align-items: center;
    flex: none;
    color: #bdbdbd;
    font-size: 17.700px;
}
.ctrl span {
    line-height: 24px;
}
.ctrl-icon {
    height: 46px;
    display: flex;
    align-items: flex-start;
    justify-content: center;
    position: relative;
}
.ctrl-unmute {
    width: 132px;
    background-color: #2b2b2b;
    border-radius: 12px;
    color: #ddd;
}
.ctrl-video {
    width: 146px;
    letter-spacing: .4px;
}
.ctrl-people {
    width: 144px;
    margin-left: 419px;
}
.ctrl-people svg {
    margin-top: 12px;
}
.people-count {
    position: absolute;
    left: 100%;
    top: 12px;
    margin-left: 8px;
    line-height: 24px;
}
.people-caret {
    width: 26px;
    padding-top: 18px;
    text-align: center;
    margin-left: -6px;
}
.ctrl-chat {
    width: 121px;
    margin-left: 5px;
}
.ctrl-chat svg {
    margin-top: 9px;
}
.ctrl-share {
    width: 146px;
    color: #23d959;
}
.ctrl-share svg {
    margin-top: 9px;
}
.ctrl-react {
    width: 122px;
}
.ctrl-react svg {
    margin-top: 6px;
}
.ctrl-apps {
    width: 118px;
}
.ctrl-apps svg {
    margin-top: 12px;
}
.leave {
    margin: 16px 18px 0 auto;
    width: 92px;
    height: 41px;
    background-color: #b22424;
    color: #fff;
    border: none;
    border-radius: 9px;
    font-family: inherit;
    font-size: 16px;
    font-weight: 700;
}
.tooltip {
    position: absolute;
    left: 53px;
    top: 1px;
    width: 454px;
    height: 53px;
    background-color: #fff;
    border: 1px solid #8a8a8a;
    color: #4a4a4a;
    font-size: 17.200px;
    line-height: 25px;
    padding: 1px 4px;
    white-space: nowrap;
}
```
